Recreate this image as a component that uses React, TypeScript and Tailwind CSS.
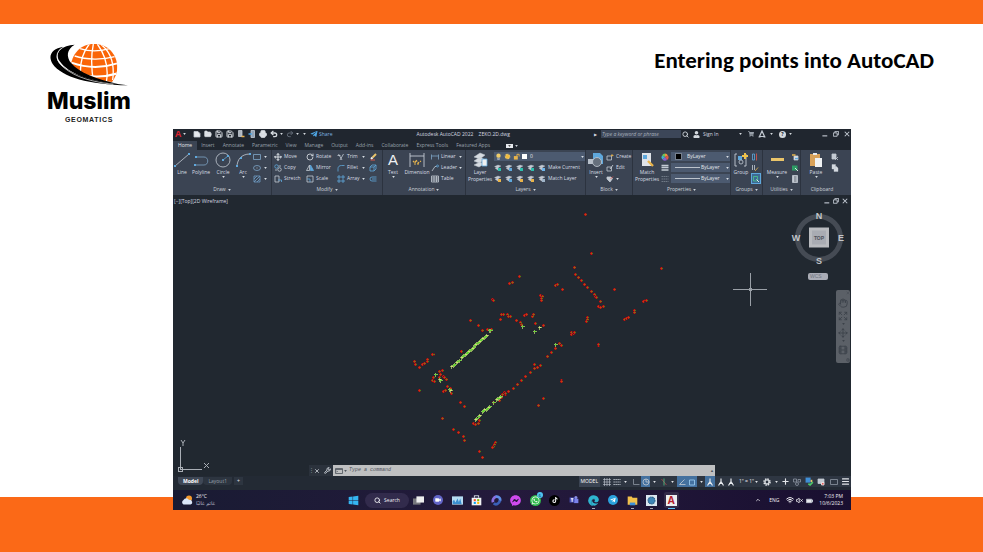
import React from "react";
import {
  FaWhatsapp, FaTiktok, FaFacebookMessenger, FaTelegramPlane, FaEdge, FaWindows, FaUser, FaShoppingCart,
} from "react-icons/fa";
import {
  Search, Wifi, VolumeX, ChevronUp, Settings, Wrench, X, Plus, Menu, Hand, Move, RotateCw, Printer,
  Save, FolderOpen, Undo2, Redo2, Video, Expand, Film,
} from "lucide-react";

type Kids = { children?: React.ReactNode };

const Caret = ({ className = "" }: { className?: string }) => (
  <svg viewBox="0 0 4 3" className={`h-[2px] w-[3px] shrink-0 ${className}`} aria-hidden="true">
    <path d="M0 0h4L2 3z" fill="currentColor" />
  </svg>
);

const Glyph = ({ children, className = "h-2 w-2" }: Kids & { className?: string }) => (
  <svg viewBox="0 0 16 16" className={`shrink-0 ${className}`} fill="none" stroke="#c3cad3" strokeWidth="1.6" aria-hidden="true">
    {children}
  </svg>
);

/* ---------- logo ---------- */
const Logo = () => (
  <div className="flex w-[84px] flex-col items-center">
    <svg viewBox="54 36 246 132" className="h-11 w-[82px]" role="img" aria-label="Globe">
      <defs>
        <clipPath id="globe">
          <path d="M120 118C126 70 150 42 192 42c42 0 68 30 70 68 0 18-6 32-16 46C200 152 150 142 120 118z" />
        </clipPath>
      </defs>
      <g clipPath="url(#globe)">
        <rect x="110" y="36" width="160" height="130" fill="#fa6508" />
        <g fill="none" stroke="#fff" strokeWidth="4">
          <path d="M150 56c25 8 60 8 88 0M134 78c35 12 86 12 120 2" />
          <path d="M124 98c45 16 95 16 138 2M122 124c45 18 95 20 142 6" strokeWidth="6" />
          <path d="M178 42c-20 25-30 55-26 100M190 42c-6 30-8 70 2 120M202 42c22 30 36 72 26 120M214 44c28 22 40 60 34 106" />
        </g>
      </g>
      <path d="M100 50C66 56 52 76 68 102c28 40 110 62 226 64C190 156 116 132 88 100 74 82 80 62 100 50z" fill="#000" />
      <path d="M134 44C98 46 72 66 88 92c28 42 100 62 176 70-66-14-116-34-140-62-16-20-14-42 10-56z" fill="#000" />
      <path d="M92 56C74 74 78 92 100 112c40 32 90 44 150 51" fill="none" stroke="#fff" strokeWidth="2" />
    </svg>
    <div className="font-['Inter',sans-serif] text-[23px] leading-[30px] font-extrabold text-black">Muslim</div>
    <div className="font-['Liberation_Sans',Arial,sans-serif] text-[7px] leading-2 font-bold tracking-widest text-[#222]">GEOMATICS</div>
  </div>
);

/* ---------- title bar ---------- */
const QuickIcon = ({ children, label }: Kids & { label: string }) => (
  <button aria-label={label} className="flex w-[11px] justify-center">{children}</button>
);

const TitleBar = () => (
  <div className="flex h-[10px] items-center bg-[#20262f] pr-px text-[#d5dae0]">
    <button aria-label="Application menu" className="w-[10px] text-[9px] leading-[10px] font-bold text-[#d8232f]">A</button>
    <Caret className="mr-1" />
    <div className="ml-px flex items-center">
      <QuickIcon label="New"><Glyph><path d="M2 3h8l4 4v7H2z" fill="#e6e9ee" /></Glyph></QuickIcon>
      <QuickIcon label="Open"><FolderOpen className="h-2 w-2" fill="#dfe3e8" strokeWidth={2} /></QuickIcon>
      <QuickIcon label="Save"><Save className="h-2 w-2" strokeWidth={3} /></QuickIcon>
      <QuickIcon label="Save as"><Save className="h-2 w-2" strokeWidth={3} /></QuickIcon>
      <QuickIcon label="Open from web"><Glyph><path d="M3 1h7v12H3z" fill="#aeb5be" /><path d="M9 13h6" stroke="#e8b04a" strokeWidth="3" /></Glyph></QuickIcon>
      <QuickIcon label="Save to mobile"><Glyph><path d="M6 1h7v14H6z" fill="#8fa3b8" /><path d="M1 8h7" stroke="#4fa3e0" strokeWidth="3" /></Glyph></QuickIcon>
      <QuickIcon label="Plot"><Printer className="h-2 w-2" fill="#dfe3e8" strokeWidth={3} /></QuickIcon>
      <QuickIcon label="Undo"><Undo2 className="h-2 w-2" strokeWidth={4} /></QuickIcon>
    </div>
    <Caret className="ml-px" />
    <div className="ml-px text-[#626b77]"><QuickIcon label="Redo"><Redo2 className="h-2 w-2" strokeWidth={3} /></QuickIcon></div>
    <Caret className="ml-px" />
    <Caret className="ml-1" />
    <button className="ml-1 flex items-center gap-px text-[#7db4e0]">
      <FaTelegramPlane className="h-2 w-2 text-[#4fa8e8]" />Share
    </button>
    <h2 className="ml-auto whitespace-pre">Autodesk AutoCAD 2022    ZEKO.2D.dwg</h2>
    <div className="ml-auto flex items-center">
      <span className="mr-1 text-[4px]">▶</span>
      <input aria-label="Search help" placeholder="Type a keyword or phrase" className="h-2 w-20 bg-[#3c4658] px-px italic outline-none placeholder:text-[#aab1bc]" />
      <Search className="ml-px h-[7px] w-[7px]" strokeWidth={3} />
      <FaUser className="ml-1 h-[7px] w-[7px]" />
      <button className="ml-[3px] w-9 text-left">Sign In</button>
      <Caret className="mr-[6px]" />
      <FaShoppingCart className="mr-1 h-[6px] w-[6px] text-[#9aa2ac]" />
      <Glyph className="mr-1 h-2 w-2"><path d="M8 2 3 13h10zM1 14h4M11 14h4" strokeWidth="2.4" /></Glyph>
      <Caret className="mr-[6px]" />
      <span className="mr-[3px] flex h-[7px] w-[7px] items-center justify-center rounded-full bg-[#d5d9de] font-bold text-[#20262f]">?</span>
      <Caret className="mr-[30px]" />
      <WindowButtons wide />
    </div>
  </div>
);

const WindowButtons = ({ wide = false }: { wide?: boolean }) => (
  <div className={`flex items-center text-[#dde1e6] ${wide ? "gap-[5px]" : "gap-[3px]"}`}>
    <button aria-label="Minimize"><Glyph className="h-[6px] w-[6px]"><path d="M1 13h13" strokeWidth="3" /></Glyph></button>
    <button aria-label="Restore"><Glyph className="h-[6px] w-[6px]"><path d="M5 5V1h10v9h-4M1 5h10v9H1z" strokeWidth="2.4" /></Glyph></button>
    <button aria-label="Close"><Glyph className="h-[6px] w-[6px]"><path d="m2 2 12 12M14 2 2 14" strokeWidth="2.8" /></Glyph></button>
  </div>
);

const tabs = ["Home", "Insert", "Annotate", "Parametric", "View", "Manage", "Output", "Add-ins", "Collaborate", "Express Tools", "Featured Apps"];
const TabStrip = () => (
  <nav className="flex h-[11px] items-end bg-[#20262f] text-[#9aa2ad]">
    {tabs.map((t, i) => (
      <button key={t} className={i === 0 ? "h-[9px] bg-[#3b4453] px-[5px] text-[#e3e6ea]" : "px-1"}>{t}</button>
    ))}
    <span className="mb-[2px] ml-3 flex items-center gap-[2px]">
      <span className="flex h-1 w-[7px] items-center justify-center bg-[#e6e9ee] text-[#555]"><Caret /></span>
      <Caret className="text-[#c9ced6]" />
    </span>
  </nav>
);

/* ---------- ribbon ---------- */
const Panel = ({ title, width, children, caret = true, last = false }: Kids & { title: string; width: string; caret?: boolean; last?: boolean }) => (
  <section className={`flex shrink-0 flex-col ${last ? "" : "border-r border-[#2c333f]"} ${width}`}>
    <div className="flex h-[34px] pt-px">{children}</div>
    <h3 className="flex h-[11px] items-center justify-center gap-[2px] text-[#cdd3da]">{title}{caret && <Caret />}</h3>
  </section>
);

const Big = ({ label, width, icon, caret = false }: { label: string; width: string; icon: React.ReactNode; caret?: boolean }) => (
  <button className={`flex shrink-0 flex-col items-center pt-px text-center leading-[7px] ${width}`}>
    {icon}
    <span className="mt-px">{label}</span>
    {caret && <Caret />}
  </button>
);

const Small = ({ icon, label, caret = false, width = "" }: { icon: React.ReactNode; label?: string; caret?: boolean; width?: string }) => (
  <button aria-label={label ?? "Tool"} className={`flex h-[11px] items-center gap-[2px] whitespace-nowrap ${width}`}>
    {icon}
    {label && <span>{label}</span>}
    {caret && <Caret className="ml-auto" />}
  </button>
);

const blue = "#5fa8dc";
const big = "h-4 w-4";

const DrawPanel = () => (
  <Panel title="Draw" width="w-[99px]">
    <Big label="Line" width="w-[18px]" icon={<Glyph className={big}><path d="M1 14 15 2" strokeWidth=".8" /><path d="M0 14h2M14 2h2" stroke={blue} strokeWidth="2" /></Glyph>} />
    <Big label="Polyline" width="w-5" icon={<Glyph className={big}><path d="M2 13h9c5 0 5-8 0-8H3" strokeWidth=".8" stroke="#7fa6c8" /><path d="M1 13h2M2 5h2" stroke={blue} strokeWidth="2" /></Glyph>} />
    <Big label="Circle" caret width="w-6" icon={<Glyph className={big}><circle cx="8" cy="8" r="7" strokeWidth=".8" /><path d="m8 8 5-4" stroke={blue} strokeWidth=".8" /><path d="M7 8h2M12 4h2" stroke={blue} strokeWidth="2" /></Glyph>} />
    <Big label="Arc" caret width="w-4" icon={<Glyph className={big}><path d="M2 15C2 8 6 2 15 2" strokeWidth=".8" /><path d="M1 14h2M14 2h2M5 6h2" stroke={blue} strokeWidth="2" /></Glyph>} />
    <div className="ml-[2px] w-[14px]">
      <Small caret width="w-full" icon={<Glyph><path d="M1 3h14v10H1z" stroke="#7fa6c8" /></Glyph>} />
      <Small caret width="w-full" icon={<Glyph><ellipse cx="8" cy="8" rx="7" ry="5" stroke="#7fa6c8" /><path d="M7 8h2" /></Glyph>} />
      <Small caret width="w-full" icon={<Glyph><path d="M2 2h12v12H2zM2 8l6-6M2 14 14 2M8 14l6-6" stroke="#6f9cc4" /></Glyph>} />
    </div>
  </Panel>
);

const ModifyPanel = () => (
  <Panel title="Modify" width="w-[111px]">
    <div className="ml-[2px] w-8">
      <Small label="Move" icon={<Move className="h-2 w-2" strokeWidth={3} />} />
      <Small label="Copy" icon={<Glyph><circle cx="5" cy="5" r="3.5" stroke={blue} /><circle cx="11" cy="11" r="3.5" /><path d="M9 4h5M4 10v4" /></Glyph>} />
      <Small label="Stretch" icon={<Glyph><path d="M2 2h8v12H2z" /><path d="M8 10h7v4" stroke={blue} /></Glyph>} />
    </div>
    <div className="w-[31px]">
      <Small label="Rotate" icon={<RotateCw className="h-2 w-2" strokeWidth={2.5} />} />
      <Small label="Mirror" icon={<Glyph><path d="M7 2v11H1z" /><path d="M9 2v11h6z" fill={blue} stroke={blue} /></Glyph>} />
      <Small label="Scale" icon={<Glyph><path d="M2 2h12v12H2z" /><path d="M2 8h6v6" stroke={blue} /></Glyph>} />
    </div>
    <div className="w-[28px]">
      <Small caret width="w-full" label="Trim" icon={<Glyph><path d="m3 2 7 12M13 2 6 14M1 5h6" /></Glyph>} />
      <Small caret width="w-full" label="Fillet" icon={<Glyph><path d="M2 15V9c0-4 3-6 7-6h6" stroke={blue} /></Glyph>} />
      <Small caret width="w-full" label="Array" icon={<Glyph><path d="M2 2h4v4H2zM10 2h4v4h-4zM2 10h4v4H2zM10 10h4v4h-4z" stroke={blue} /></Glyph>} />
    </div>
    <div className="ml-1">
      <Small icon={<Glyph><path d="M14 2 7 9" stroke="#e9c46a" strokeWidth="4" /><path d="m7 9-3 3" stroke="#f2f2f2" strokeWidth="4" /><path d="M3 14h9" stroke="#e0564a" strokeWidth="2" /></Glyph>} />
      <Small icon={<Glyph><path d="M2 6h8v8H2zM2 6l4-4h8v8l-4 4M10 6l4-4" stroke={blue} /></Glyph>} />
      <Small icon={<Glyph><path d="M15 4H6a4 4 0 0 0 0 8h9M15 8H6" stroke={blue} /></Glyph>} />
    </div>
  </Panel>
);

const AnnotationPanel = () => (
  <Panel title="Annotation" width="w-[83px]">
    <Big label="Text" caret width="w-5" icon={<span className="h-4 font-['Liberation_Sans',Arial,sans-serif] text-[15px] leading-4 text-[#eef0f2]">A</span>} />
    <Big label="Dimension" width="w-7" icon={<Glyph className={big}><path d="M1 1v14M15 1v14M1 4h14" strokeWidth=".9" /><path d="m4 9 2 2 1-3 2 3 3-2M5 12h6" stroke="#e5b34d" strokeWidth="1.2" strokeDasharray="2 1" /></Glyph>} />
    <div className="w-[31px]">
      <Small caret width="w-full" label="Linear" icon={<Glyph><path d="M1 3v10M15 3v10M1 6h14" stroke="#7fa6c8" /></Glyph>} />
      <Small caret width="w-full" label="Leader" icon={<Glyph><path d="m2 14 6-9h3" /><circle cx="13" cy="4" r="2" stroke={blue} /></Glyph>} />
      <Small label="Table" icon={<Glyph><path d="M1 2h14v12H1zM1 6h14M1 10h14M6 2v12M11 2v12" /></Glyph>} />
    </div>
  </Panel>
);

const LayerIcon = ({ accent }: { accent: string }) => (
  <Glyph><path d="M1 5 8 2l6 2-7 4zM2 8l6-1 5 3-6 2z" fill="#c3cad3" strokeWidth=".6" /><path d="M8 8h6v6H8z" fill={accent} stroke="none" /></Glyph>
);

const layerRows = [
  { label: "Make Current", accents: ["#2dbfae", "#5fa8dc", "#2dbfae", "#2dbfae", "#6fb5ea"] },
  { label: "Match Layer", accents: ["#e9b44a", "#5fa8dc", "#e9b44a", "#e9b44a", "#9fb4c8"] },
];

const LayersPanel = () => (
  <Panel title="Layers" width="w-[120px]">
    <Big label="Layer Properties" width="w-7" icon={<Glyph className={big}><path d="M2 5 8 1l5 2-5 4zM2 9l6-4 5 3-6 3zM2 13l6-3 4 2-5 3z" fill="#d5dae0" strokeWidth=".5" /><path d="M10 7h5v7h-5z" fill="#eef0f2" stroke="#5fa8dc" strokeWidth=".8" /></Glyph>} />
    <div className="w-[91px]">
      <div className="relative flex h-[11px] items-center">
        <select aria-label="Layer" className="h-[9px] w-full appearance-none bg-[#4c5a70] pl-[36px] text-[#e3e6ea]"><option>0</option></select>
        <div className="pointer-events-none absolute inset-0 flex items-center gap-[2px] px-px">
          <Glyph className="h-[7px] w-[7px]"><circle cx="8" cy="6" r="5" fill="#f0cd6a" stroke="none" /><path d="M6 12h4v3H6z" /></Glyph>
          <Glyph className="h-[7px] w-[7px]"><circle cx="8" cy="8" r="5" fill="#f0b93c" stroke="#f0cd6a" strokeDasharray="2 1.5" strokeWidth="3" /></Glyph>
          <Glyph className="h-[7px] w-[7px]"><path d="M2 7h9v8H2z" fill="#e9b44a" stroke="none" /><path d="M9 7V3h5v5" stroke="#e9b44a" strokeWidth="2" /></Glyph>
          <span className="h-[5px] w-[5px] bg-white" />
          <Caret className="ml-auto" />
        </div>
      </div>
      {layerRows.map((r) => (
        <div key={r.label} className="flex items-center gap-[3px]">
          {r.accents.slice(0, 4).map((a, i) => <Small key={i} icon={<LayerIcon accent={a} />} />)}
          <Small label={r.label} icon={<LayerIcon accent={r.accents[4]} />} />
        </div>
      ))}
    </div>
  </Panel>
);

const BlockPanel = () => (
  <Panel title="Block" width="w-[47px]">
    <Big label="Insert" caret width="w-5" icon={<Glyph className={big}><path d="M5 1h7l3 3v8H5z" fill="#5fa8dc" stroke="none" /><path d="M0 7h6v5H0z" fill="#b8c0ca" stroke="none" /><circle cx="9" cy="10" r="4.5" fill="#66707d" strokeWidth=".8" /></Glyph>} />
    <div>
      <Small label="Create" icon={<Glyph><path d="M2 6h9v8H2z" /><path d="M10 5h5M12 2v5" stroke="#e9b44a" /></Glyph>} />
      <Small label="Edit" icon={<Glyph><path d="M2 6h9v8H2z" /><path d="m8 10 6-8" stroke="#d9dde2" /></Glyph>} />
      <Small caret icon={<Glyph><path d="M2 4h8l3 3-5 7-6-6z" fill="#c3cad3" /><path d="m9 8 5-5" stroke="#e0564a" /></Glyph>} />
    </div>
  </Panel>
);

const PropSelect = ({ label, kind }: { label: string; kind: "colour" | "line" }) => (
  <div className="relative flex h-[11px] items-center">
    <select aria-label={label} className={`h-[9px] w-full appearance-none bg-[#4c5a70] text-[#e3e6ea] ${kind === "colour" ? "pl-4" : "pl-[30px]"}`}><option>ByLayer</option></select>
    <div className="pointer-events-none absolute inset-0 flex items-center pr-px pl-1">
      {kind === "colour" ? <span className="h-[7px] w-[7px] border border-[#77808d] bg-black" /> : <span className="h-px w-[25px] bg-[#bcc3cc]" />}
      <Caret className="ml-auto" />
    </div>
  </div>
);

const PropertiesPanel = () => (
  <Panel title="Properties" width="w-[98px]">
    <Big label="Match Properties" width="w-7" icon={<Glyph className={big}><path d="M3 1h9v13H3z" fill="#dfe3e8" stroke="none" /><path d="M4 3h4v4H4z" fill="#5fa8dc" stroke="none" /><path d="M9 9l5 5" stroke="#e9b44a" strokeWidth="2.4" /></Glyph>} />
    <div className="w-[10px]">
      <Small icon={<Glyph><path d="M8 8V1a7 7 0 0 1 6 4z" fill="#e9963a" stroke="none" /><path d="m8 8 6-3a7 7 0 0 1-2 9z" fill="#e0564a" stroke="none" /><path d="m8 8 4 6a7 7 0 0 1-9-1z" fill="#8a5fd0" stroke="none" /><path d="m8 8-5 5a7 7 0 0 1-1-8z" fill="#3fb5d0" stroke="none" /><path d="M8 8 2 5a7 7 0 0 1 6-4z" fill="#6fc35a" stroke="none" /></Glyph>} />
      <Small icon={<Glyph><path d="M1 3h14M1 7h14M1 12h14" strokeWidth="3" /></Glyph>} />
      <Small icon={<Glyph><path d="M1 3h14M1 8h14M1 13h14" strokeDasharray="3 1" stroke="#7c8592" /></Glyph>} />
    </div>
    <div className="w-[59px]">
      <PropSelect label="Object colour" kind="colour" />
      <PropSelect label="Line weight" kind="line" />
      <PropSelect label="Line type" kind="line" />
    </div>
  </Panel>
);

const Ribbon = () => (
  <div className="flex h-[45px] overflow-hidden bg-[#3b4453] text-[#d8dde3]">
    <DrawPanel />
    <ModifyPanel />
    <AnnotationPanel />
    <LayersPanel />
    <BlockPanel />
    <PropertiesPanel />
    <Panel title="Groups" width="w-8">
      <Big label="Group" width="w-5" icon={<Glyph className={big}><path d="M4 2H2v12h2M11 2h2v12h-2" strokeWidth=".9" /><path d="M5 4h4v4H5z" fill="#5fa8dc" stroke="none" /><circle cx="8" cy="10" r="2" strokeWidth=".8" /><path d="M12 1v6M9 4h6" stroke="#f0c24a" strokeWidth="2" /></Glyph>} />
      <div>
        <Small icon={<Glyph><path d="M3 2h4v12H3z" stroke={blue} /><path d="M11 1v14" stroke="#e0564a" /></Glyph>} />
        <Small icon={<Glyph><path d="M3 2v10M7 2v10" /><path d="m8 14 6-7" stroke="#e9b44a" /></Glyph>} />
        <span className="flex h-[11px] w-[10px] items-center justify-center border border-[#5fa8dc] bg-[#3d6a94]"><Small icon={<Glyph><path d="M3 3h8v9H3z" stroke="#4ec98a" /><path d="m9 9 5 5" stroke="#fff" /></Glyph>} /></span>
      </div>
    </Panel>
    <Panel title="Utilities" width="w-[38px]">
      <Big label="Measure" caret width="w-7" icon={<Glyph className={big}><path d="M2 6h13v3H2z" fill="#e9c46a" stroke="none" /></Glyph>} />
      <div>
        <Small icon={<Glyph><path d="M6 6h8v8H6z" fill="#e3e6ea" /><path d="M2 4h7" stroke="#e9b44a" strokeWidth="3" /><path d="M8 11h6" stroke={blue} strokeWidth="3" /></Glyph>} />
        <Small icon={<Glyph><path d="M2 3h11v10H2z" fill="#2e9c66" stroke="none" /><path d="m8 8 6 6" stroke="#fff" /></Glyph>} />
        <Small icon={<Glyph><path d="M3 1h10v14H3z" fill="#c3cad3" /><path d="M6 4h5M6 8h5M6 12h5" stroke="#4a525e" /></Glyph>} />
      </div>
    </Panel>
    <Panel title="Clipboard" width="w-[42px]" caret={false} last>
      <Big label="Paste" caret width="w-[30px]" icon={<Glyph className={big}><path d="M2 2h10v12H2z" fill="#d9a25a" stroke="none" /><path d="M5 1h4v2H5z" fill="#e6e9ee" stroke="none" /><path d="M7 6h7v9H7z" fill="#f0f2f4" stroke="none" /></Glyph>} />
      <div>
        <Small icon={<Glyph><path d="M2 2h8v10H2z" fill="#c3cad3" /><path d="m8 8 6 6M14 8l-6 6" /></Glyph>} />
        <Small icon={<Glyph><path d="M2 1h7v9H2zM6 5h5l3 3v7H6z" fill="#d5dae0" strokeWidth=".8" /></Glyph>} />
      </div>
    </Panel>
  </div>
);

/* ---------- drawing area ---------- */
// Survey points are kept in thirds of a drawing unit, relative to each sheet's origin.
const sheets = [
  { ox: 400, oy: 300, pts: "211,62 234,75 248,91 264,88 270,92 184,153 101,163 97,162 42,184 46,194 59,203 67,194 74,190 81,185 83,178 58,272 119,214 128,211 122,224 100,232 98,240 102,243 130,228 133,232 138,238 143,259 152,266 130,275 135,272 155,280 181,307 193,320 128,354 160,388 175,397 190,410 192,421 237,454 247,471 287,427 282,432 279,438 277,443 429,296 416,315 483,243 220,369 227,372 234,369 238,362 298,302 279,308 305,293 308,283 314,277 316,282 325,274 118,233" },
  { ox: 480, oy: 205, pts: "316,29 333,145 283,188 544,189 402,254 117,214 98,231 89,236 38,284 40,287 225,240 231,239 246,253 180,272 187,274 183,280 184,287 287,207 296,217 305,227 314,238 323,247 333,258 342,268 346,273 350,277 362,290 354,304 362,307 369,305 64,327 70,328 62,344 82,328 84,333 90,333 109,345 121,351 123,357 134,331 140,329 157,333 160,329 166,355 189,360 321,337 322,343 320,350 355,420 356,419 434,342 438,339 446,338 462,317 463,322 491,288 496,285 500,287 275,381 273,388 279,384 284,383 237,416 245,420 226,431 214,442 201,455 163,478 172,488 180,481 163,491 150,503 137,514 125,526 112,538 100,550 84,559 76,564 68,567 243,526 244,530 21,374 8,377 33,374" },
].flatMap(({ ox, oy, pts }) =>
  pts.split(" ").map((p) => {
    const [x, y] = p.split(",").map(Number);
    return [Math.floor(ox + x / 3), Math.floor(oy + y / 3)];
  }),
);

const run = (x1: number, y1: number, x2: number, y2: number, n: number) =>
  Array.from({ length: n }, (_, i) => [Math.round(x1 + ((x2 - x1) * i) / (n - 1)), Math.round(y1 + ((y2 - y1) * i) / (n - 1))]);

const bright = [
  ...run(451, 366, 459, 360, 6), ...run(461, 357, 486, 335, 22), [489, 330], [490, 330],
  ...run(475, 419, 479, 415, 4), ...run(482, 411, 489, 406, 7), [493, 402], ...run(496, 399, 500, 396, 5),
  [435, 374], [439, 379], [440, 380], [449, 389], [450, 390], [522, 326], [534, 331], [539, 327], [555, 344],
];

const DrawingArea = () => (
  <div className="relative flex min-h-[281px] flex-1 flex-col overflow-hidden bg-[#212830] text-[#d5dae0]">
    <svg viewBox="173 195 678 281" preserveAspectRatio="xMidYMid slice" className="absolute inset-0 h-full w-full" role="img" aria-label="Survey points">
      <g shapeRendering="crispEdges">
        {sheets.map(([x, y], i) => (
          <g key={i}>
            <path d={`M${x - 1} ${y - 1}h3v3h-3z`} fill="#5a1c20" />
            <path d={`M${x - 1} ${y}h3v1h-3zM${x} ${y - 1}h1v3h-1z`} fill="#c41613" />
            <path d={`M${x} ${y}h1v1h-1z`} fill={i % 4 === 0 ? "#6a8f10" : "#c83c10"} />
            <path d={`M${x + 1} ${y}h1v1h-1z`} fill={i % 2 ? "#3f8a18" : "#9a4a14"} />
          </g>
        ))}
        {bright.map(([x, y], i) => (
          <path key={`b${i}`} d={`M${x - 1} ${y}h4v1h-4zM${x} ${y - 1}h1v4h-1z`} fill="#8fae5c" />
        ))}
        {bright.map(([x, y], i) => (
          <path key={`c${i}`} d={`M${x} ${y}h2v1h-2z`} fill={i % 3 ? "#62dc30" : "#d2dc7a"} />
        ))}
        <path d="M733 289.5h34M750.5 273v33" stroke="#9aa0a7" />
        <path d="M749 288h3v3h-3z" fill="#9aa0a7" />
      </g>
      <g fill="none" stroke="#a9aeb5">
        <path d="M180.5 447v22.5H202M178.5 467.5h4v4h-4z" shapeRendering="crispEdges" />
        <path d="m181 440 2 3v3M185 440l-2 3M204 463l5 5M209 463l-5 5" />
      </g>
      <circle cx="819" cy="238" r="21.5" fill="none" stroke="#454b54" strokeWidth="5" />
      <path d="M809 227.500h20v20h-20z" fill="#b9bbbf" />
      <path d="M812 230.500h14v14h-14z" fill="#a9acb3" />
      <g textAnchor="middle" fontFamily="Liberation Sans, Arial, sans-serif" fontWeight="700" fill="#c3c6ca">
        <text x="819" y="219" fontSize="9">N</text>
        <text x="819" y="264" fontSize="9">S</text>
        <text x="796" y="241" fontSize="9">W</text>
        <text x="841" y="241" fontSize="9">E</text>
        <text x="819" y="240" fontSize="5" fill="#4d525a">TOP</text>
      </g>
      <rect x="808" y="273" width="20" height="7" rx="2" fill="#a9acb6" />
      <text x="810" y="278" fontSize="5" fill="#70757f" fontFamily="Liberation Sans, Arial, sans-serif">WCS</text>
    </svg>
    <div className="relative flex h-3 items-center justify-between pr-[3px] pl-px">
      <span>[−][Top][2D Wireframe]</span>
      <WindowButtons />
    </div>
    <div className="relative mt-[83px] mr-px flex h-[73px] w-[14px] flex-col items-center justify-around self-end rounded-xs bg-[#5b6067] text-[#3b4149]">
      <X className="h-[4px] w-[4px] self-end" />
      <Hand className="h-[10px] w-[10px]" />
      <Expand className="h-[10px] w-[10px]" />
      <Caret />
      <Move className="h-[10px] w-[10px]" />
      <Caret />
      <Film className="h-[10px] w-[10px]" />
      <Settings className="h-[4px] w-[4px] self-end" />
    </div>
    <div className="relative mt-auto mr-[136px] ml-[136px] flex h-[11px] items-center bg-[#2b323c]">
      <span className="w-1 text-center text-[#8d96a2]">⋮</span>
      <X className="mx-px h-[6px] w-[6px]" strokeWidth={3} />
      <Wrench className="mr-[2px] ml-[3px] h-[7px] w-[7px]" strokeWidth={3} />
      <label className="flex h-[11px] flex-1 items-center gap-px bg-[#bfc0c1] px-px text-[#4d535b]">
        <Glyph className="ml-px h-2 w-2"><path d="M1 3h14v10H1zM1 5h14M3 8l2 1-2 1" stroke="#4d535b" /></Glyph>
        <Caret />
        <input aria-label="Command line" placeholder="Type a command" className="ml-px min-w-0 flex-1 bg-transparent font-['Liberation_Mono',monospace] italic outline-none placeholder:text-[#4d535b]" />
        <span className="text-[4px]">▲</span>
      </label>
    </div>
  </div>
);

/* ---------- status bar ---------- */
const Cell = ({ children, width, on = false, label }: Kids & { width: string; on?: boolean; label: string }) => (
  <button aria-label={label} className={`flex h-[11px] items-center justify-center ${width} ${on ? "bg-[#44719f]" : ""}`}>{children}</button>
);

const Man = () => <Glyph><path d="M8 1v6l-5 8M8 7l5 8M4 11h8" strokeWidth="2.4" stroke="#e3e6ea" /></Glyph>;

const StatusBar = () => (
  <div className="flex h-[14px] items-start justify-between bg-[#232a34] text-[#e3e6ea]">
    <div className="flex h-[9px] items-center pl-[5px]">
      <button className="h-2 rounded-b-sm bg-[#3f4856] px-[5px] font-bold leading-2 text-white">Model</button>
      <button className="h-2 rounded-b-sm bg-[#2d3540] px-[5px] leading-2 text-[#99a1ac]">Layout1</button>
      <button aria-label="New layout" className="ml-[2px] h-2 bg-[#2d3540] px-[3px] leading-2">+</button>
    </div>
    <div className="flex items-center bg-[#2e3642]">
      <button className="h-[11px] bg-[#3b4453] px-[2px] text-white">MODEL</button>
      <Cell label="Grid" width="w-[13px]"><Glyph><path d="M3 0v16M8 0v16M13 0v16M0 3h16M0 8h16M0 13h16" strokeWidth="1.2" /></Glyph></Cell>
      <Cell label="Snap" width="w-2"><Glyph><path d="M1 3h14M1 8h14M1 13h14" strokeDasharray="2.5 1.5" strokeWidth="2" /></Glyph></Cell>
      <Cell label="Snap options" width="w-[9px]"><Caret /></Cell>
      <Cell label="Ortho" width="w-[11px]"><Glyph><path d="M3 2v11h12" stroke="#8d96a2" /></Glyph></Cell>
      <Cell label="Polar" width="w-[9px]" on><Glyph><circle cx="8" cy="8" r="6" /><path d="M8 2v6h7" /></Glyph></Cell>
      <Cell label="Polar options" width="w-[9px]"><Caret /></Cell>
      <Cell label="Isometric" width="w-[9px]"><Glyph><path d="m3 2 10 12" stroke="#b04a4a" /><path d="M8 1v14" stroke="#4ec98a" /></Glyph></Cell>
      <Cell label="Isometric options" width="w-[9px]"><Caret /></Cell>
      <Cell label="Tracking" width="w-[10px]" on><Glyph><path d="M13 3 3 13h12" /></Glyph></Cell>
      <Cell label="Object snap" width="w-[10px]" on><Glyph><path d="M3 4h10v10H3z" stroke="#9fd0f5" /></Glyph></Cell>
      <Cell label="Object snap options" width="w-2"><Caret /></Cell>
      <Cell label="Annotation visibility" width="w-[10px]" on><Man /></Cell>
      <Cell label="Auto scale" width="w-[11px]"><Man /></Cell>
      <Cell label="Annotation scale" width="w-[10px]"><Man /></Cell>
      <button className="flex h-[11px] w-[25px] items-center justify-center gap-px whitespace-nowrap">1" = 1" <Caret /></button>
      <Cell label="Workspace" width="w-[11px]">
        <Glyph><circle cx="8" cy="8" r="6" strokeWidth="3" strokeDasharray="3 1.7" stroke="#e3e6ea" /><circle cx="8" cy="8" r="4" strokeWidth="2.4" stroke="#e3e6ea" /></Glyph>
      </Cell>
      <Cell label="Workspace options" width="w-2"><Caret /></Cell>
      <Cell label="Monitor" width="w-[11px]"><Plus className="h-[9px] w-[9px]" strokeWidth={3} /></Cell>
      <Cell label="Isolate" width="w-3"><Glyph><path d="M1 2h6v6H1zM10 3h5v5h-5z" stroke="#8d96a2" /><circle cx="8" cy="12" r="3" stroke="#8d96a2" /></Glyph></Cell>
      <Cell label="Hardware" width="w-3"><Glyph className="h-[9px] w-[9px]"><path d="M1 1h9v9H1z" fill="#3f8fd6" stroke="none" /><path d="M10 5h3v4h-3z" fill="#e9c46a" stroke="none" /><path d="m6 12 3 2 5-5" stroke="#4ec96a" strokeWidth="3" /></Glyph></Cell>
      <Cell label="Graphics" width="w-3"><Glyph><path d="M2 2h12v9H2z" fill="#c3cad3" /><path d="M9 9h5v5H9z" fill="#e05a5a" stroke="#eee" /></Glyph></Cell>
      <Cell label="Clean screen" width="w-[13px]"><Glyph><path d="M1 3h14v10H1z" stroke="#8d96a2" /></Glyph></Cell>
      <Cell label="Customize" width="w-[11px]"><Menu className="h-[9px] w-[9px]" strokeWidth={3} /></Cell>
    </div>
  </div>
);

/* ---------- taskbar ---------- */
const TaskApp = ({ label, children, mark = "" }: Kids & { label: string; mark?: string }) => (
  <button aria-label={label} className="relative flex h-5 items-center justify-center">
    {children}
    {mark && <span className={`absolute bottom-px h-px ${mark}`} />}
  </button>
);

const Taskbar = () => (
  <div className="flex h-5 items-center justify-between bg-linear-to-r from-[#191b33] via-[#241a3c] to-[#190f30] text-[#f0f0f4]">
    <button className="flex w-[169px] items-center gap-[3px] pl-2 text-left leading-[7px]">
      <svg viewBox="0 0 24 20" className="h-[10px] w-3" aria-hidden="true">
        <circle cx="16" cy="7" r="6" fill="#f59a2c" />
        <path d="M5 19a5 5 0 0 1 0-9 6 6 0 0 1 11 0 4.5 4.500 0 0 1 3 9z" fill="#dbe7f8" />
      </svg>
      <span><span className="block">26°C</span><span className="block font-['DejaVu_Sans',sans-serif] text-[#b9b9c8]" lang="ar">غائم غالبًا</span></span>
    </button>
    <div className="flex items-center">
      <button aria-label="Start" className="flex w-[22px] pl-[5px]"><FaWindows className="h-[11px] w-[11px] text-[#35b5f2]" /></button>
      <button className="flex h-[15px] w-11 items-center justify-center gap-[3px] rounded-full bg-[#322b4c]"><Search className="h-[7px] w-[7px]" strokeWidth={3} />Search</button>
      <div className="grid w-[272px] grid-cols-14">
        <TaskApp label="Task view"><Glyph className="h-[11px] w-[11px]"><path d="M0 5h11v9H0z" fill="#77777c" stroke="none" /><path d="M5 2h11v9H5z" fill="#eee" stroke="none" /></Glyph></TaskApp>
        <TaskApp label="Chat"><span className="flex h-[10px] w-[10px] items-center justify-center rounded-full bg-[#6264c7]"><Video className="h-[6px] w-[6px]" fill="#fff" /></span></TaskApp>
        <TaskApp label="Monitor"><Glyph className="h-[11px] w-[11px]"><path d="M0 2h16v12H0z" fill="#b7dcf2" stroke="none" /><path d="M1 13V9l2-2 2 4 3-6 2 5 2-5 2 8z" fill="#3a8fd0" stroke="none" /></Glyph></TaskApp>
        <TaskApp label="Store"><Glyph className="h-[11px] w-[11px]"><path d="M1 4h14v11H1z" fill="#f2f4f6" stroke="none" /><path d="M5 4V1h6v3" /><path d="M4 6h3v3H4z" fill="#f25022" stroke="none" /><path d="M9 6h3v3H9z" fill="#7fba00" stroke="none" /><path d="M4 10h3v3H4z" fill="#00a4ef" stroke="none" /><path d="M9 10h3v3H9z" fill="#ffb900" stroke="none" /></Glyph></TaskApp>
        <TaskApp label="Microsoft 365"><Glyph className="h-[11px] w-[11px]"><path d="M8 2.500a6 6 0 0 0-5 8" stroke="#8a6fe0" strokeWidth="4" /><path d="M7 2.500c5-1 7 3 6 6" stroke="#5f8fe8" strokeWidth="4" /><path d="M4 12c3 3 8 1 9-4" stroke="#3a5fb8" strokeWidth="4" /></Glyph></TaskApp>
        <TaskApp label="Messenger"><FaFacebookMessenger className="h-[11px] w-[11px] text-[#d04af0]" /></TaskApp>
        <TaskApp label="WhatsApp">
          <span className="flex h-[11px] w-[11px] items-center justify-center rounded-full bg-[#2fb84c]"><FaWhatsapp className="h-[9px] w-[9px] text-white" /></span>
          <span className="absolute top-[2px] right-[2px] flex h-[6px] w-[6px] items-center justify-center rounded-full bg-[#4fc3f0] text-[4px] text-[#123]">6</span>
        </TaskApp>
        <TaskApp label="TikTok"><span className="flex h-[11px] w-[11px] items-center justify-center rounded-full bg-black"><FaTiktok className="h-[6px] w-[6px] text-white" /></span></TaskApp>
        <TaskApp label="Teams"><Glyph className="h-[10px] w-[10px]"><circle cx="11" cy="4" r="2.5" fill="#8b8fe8" stroke="none" /><path d="M8 6h7v7H8z" fill="#7b83eb" stroke="none" /><path d="M1 4h8v8H1z" fill="#4b53bc" stroke="none" /><path d="M3 6h4M5 6v5" stroke="#fff" /></Glyph></TaskApp>
        <TaskApp label="Edge" mark="w-[3px] bg-[#a9a9b5]"><FaEdge className="h-[11px] w-[11px] text-[#2fb5d0]" /></TaskApp>
        <TaskApp label="Telegram"><span className="flex h-[10px] w-[10px] items-center justify-center rounded-full bg-[#2aa1dc]"><FaTelegramPlane className="h-[6px] w-[6px] text-white" /></span></TaskApp>
        <TaskApp label="File Explorer" mark="w-[3px] bg-[#a9a9b5]"><Glyph className="h-[11px] w-[11px]"><path d="M1 2h6l1 2h7v10H1z" fill="#f3c04a" stroke="none" /><path d="M4 11h8v4H4z" fill="#3f8fd6" stroke="none" /></Glyph></TaskApp>
        <TaskApp label="Survey tool" mark="w-[3px] bg-[#a9a9b5]"><Glyph className="h-[11px] w-[11px]"><path d="M0 0h16v16H0z" fill="#dbe6f0" stroke="none" /><circle cx="8" cy="8" r="5" fill="#3f86b8" stroke="#28597f" strokeDasharray="2 1" /></Glyph></TaskApp>
        <TaskApp label="AutoCAD" mark="w-[7px] bg-[#5cc3f5]"><span className="absolute inset-x-[2px] inset-y-[2px] rounded-xs bg-[#332a48]" /><span className="relative flex h-[11px] w-[11px] items-center justify-center bg-[#eceef0] text-[10px] leading-[10px] font-bold text-[#b3202c]">A</span></TaskApp>
      </div>
    </div>
    <div className="flex w-[169px] items-center justify-end pr-2">
      <ChevronUp className="mr-2 h-[6px] w-[6px]" strokeWidth={3} />
      <span className="mr-[7px]">ENG</span>
      <Wifi className="mr-[2px] h-2 w-2" strokeWidth={3} />
      <VolumeX className="mr-[3px] h-[7px] w-[7px]" strokeWidth={3} />
      <Glyph className="mr-[6px] h-[7px] w-[7px]"><path d="M1 5h12v8H1zM14 7h2v4h-2z" fill="#e8e8ee" /></Glyph>
      <time className="text-right leading-[7px] whitespace-nowrap"><span className="block">7:03 PM</span><span className="block">10/6/2023</span></time>
    </div>
  </div>
);

export default function App() {
  return (
    <div className="flex min-h-screen flex-col bg-white">
      <div className="h-6 bg-[#fb6917]" />
      <header className="flex h-[105px] items-start justify-between pt-[18px] pr-[49px] pl-[47px]">
        <Logo />
        <h1 className="mt-1 font-['Carlito','Open_Sans',sans-serif] text-[23px] leading-7 font-bold text-black">Entering points into AutoCAD</h1>
      </header>
      <main className="relative z-10 mr-[132px] mb-[-13px] ml-[173px] flex flex-1 flex-col font-['Open_Sans','Noto_Sans',sans-serif] text-[5px] leading-[9px]">
        <TitleBar />
        <TabStrip />
        <Ribbon />
        <DrawingArea />
        <StatusBar />
        <Taskbar />
      </main>
      <footer className="h-[55px] bg-[#fb6917]" />
    </div>
  );
}
